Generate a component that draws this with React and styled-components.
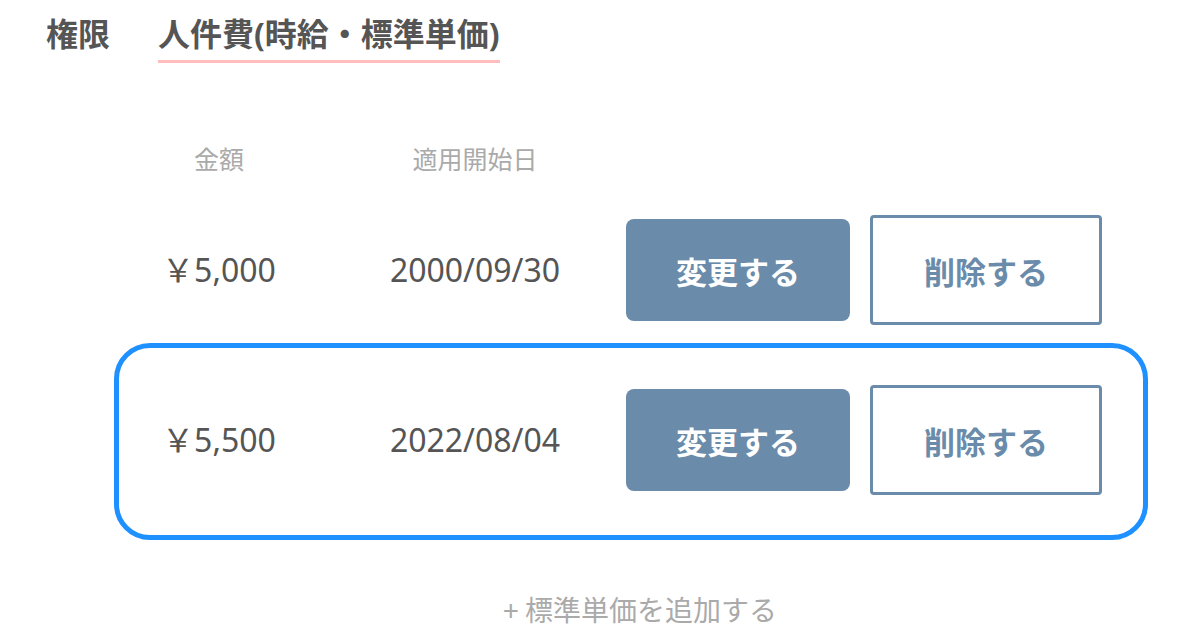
import React from 'react';
import styled, { createGlobalStyle } from 'styled-components';

const GlobalStyle = createGlobalStyle`
  body {
    margin: 0;
    background: #fff;
    font-family: "Noto Sans", "Noto Sans CJK JP", sans-serif;
    color: #555;
  }
`;

const Page = styled.div`
  width: 1186px;
  height: 638px;
  overflow: hidden;
  box-sizing: border-box;
`;

const Tabs = styled.nav`
  display: flex;
  align-items: flex-start;
  gap: 48px;
  padding: 12px 0 0 46px;
  height: 63px;
  box-sizing: border-box;
`;

const Tab = styled.div`
  font-size: 32px;
  font-weight: 700;
  line-height: 44px;
  color: #555;
  padding-bottom: 4px;
  border-bottom: 3px solid ${({ active }) => (active ? '#ffbdbd' : 'transparent')};
`;

const Table = styled.div`
  margin-left: 114px;
  width: 1034px;
`;

const Grid = styled.div`
  display: grid;
  grid-template-columns: 210px 302px 224px 252px;
  align-items: center;
`;

const HeadRow = styled(Grid)`
  height: 122px;
  padding-top: 79px;
  box-sizing: border-box;
  align-items: start;
`;

const HeadCell = styled.div`
  font-size: 25px;
  line-height: 34px;
  color: #aaa;
  text-align: center;
`;

const Row = styled(Grid)`
  position: relative;
  height: 170px;
  ${({ selected }) => selected && `
    &::before {
      content: '';
      position: absolute;
      top: -12px;
      bottom: -15px;
      left: 0;
      right: 0;
      border: 5px solid #1e90ff;
      border-radius: 36px;
      pointer-events: none;
    }
  `}
`;

const Value = styled.div`
  font-size: 32px;
  line-height: 40px;
  color: #555;
  text-align: center;
`;

const Button = styled.button`
  font-family: "Noto Sans CJK JP", sans-serif;
  font-size: 31px;
  font-weight: 700;
  border-radius: ${({ outline }) => (outline ? '4px' : '8px')};
  height: ${({ outline }) => (outline ? '110px' : '102px')};
  width: ${({ outline }) => (outline ? '232px' : '224px')};
  margin-left: ${({ outline }) => (outline ? '20px' : '0')};
  background: ${({ outline }) => (outline ? '#fff' : '#6a8caa')};
  color: ${({ outline }) => (outline ? '#6a8caa' : '#fff')};
  border: ${({ outline }) => (outline ? '3px solid #6a8caa' : 'none')};
  box-sizing: border-box;
  padding: 0;
  cursor: pointer;
`;

const AddLink = styled.div`
  text-align: center;
  font-family: "Noto Sans CJK JP", sans-serif;
  font-size: 28px;
  line-height: 36px;
  color: #aaa;
  margin-top: 66px;
  width: 1280px;
`;

const rates = [
  { amount: '￥5,000', date: '2000/09/30' },
  { amount: '￥5,500', date: '2022/08/04', selected: true },
];

export default function App() {
  return (
    <Page>
      <GlobalStyle />
      <Tabs>
        <Tab>権限</Tab>
        <Tab active>人件費(時給・標準単価)</Tab>
      </Tabs>
      <Table>
        <HeadRow>
          <HeadCell>金額</HeadCell>
          <HeadCell>適用開始日</HeadCell>
        </HeadRow>
        {rates.map((r) => (
          <Row key={r.date} selected={r.selected}>
            <Value>{r.amount}</Value>
            <Value>{r.date}</Value>
            <Button>変更する</Button>
            <Button outline>削除する</Button>
          </Row>
        ))}
      </Table>
      <AddLink>+ 標準単価を追加する</AddLink>
    </Page>
  );
}
